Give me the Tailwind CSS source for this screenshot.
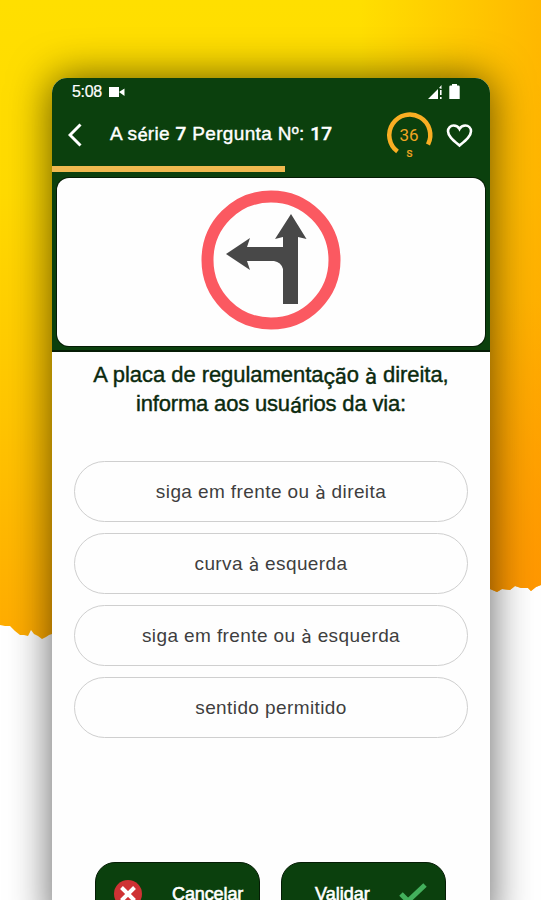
<!DOCTYPE html>
<html lang="pt">
<head>
    <meta charset="utf-8">
    <meta name="viewport" content="width=device-width, initial-scale=1">
    <title>Pergunta 17</title>
    <script src="https://cdn.jsdelivr.net/npm/@tailwindcss/browser@4"></script>
</head>
<body class="relative h-[900px] w-[541px] overflow-hidden bg-white font-['Liberation_Sans',sans-serif]">

    <!-- backdrop with torn edge -->
    <svg class="absolute inset-0" width="541" height="900" viewBox="0 0 541 900">
        <defs>
            <linearGradient id="sun" x1="0" y1="0" x2="0" y2="640" gradientUnits="userSpaceOnUse">
                <stop offset="0" stop-color="#ffdf00"/>
                <stop offset=".3" stop-color="#ffda00"/>
                <stop offset=".65" stop-color="#ffc500"/>
                <stop offset="1" stop-color="#ffab00"/>
            </linearGradient>
            <linearGradient id="side" x1="360" y1="0" x2="560" y2="0" gradientUnits="userSpaceOnUse">
                <stop offset="0" stop-color="#ff8c00" stop-opacity="0"/>
                <stop offset="1" stop-color="#ff8c00" stop-opacity=".52"/>
            </linearGradient>
            <linearGradient id="low" x1="0" y1="300" x2="0" y2="600" gradientUnits="userSpaceOnUse">
                <stop offset="0" stop-color="#ff9000" stop-opacity="0"/>
                <stop offset="1" stop-color="#ff9000" stop-opacity=".55"/>
            </linearGradient>
        </defs>
        <path fill="url(#sun)" d="M0 0H541V585L536 587L531 591L528 588L521 588L515 586L510 590L502 589L497 592L490 589L52 634L49 635L46 637L42 639L38 636L34 634L31 630L28 636L24 635L20 635L15 631L10 626L5 626L0 625Z"/>
        <path fill="url(#side)" d="M300 0H541V585L536 587L531 591L528 588L521 588L515 586L510 590L502 589L497 592L490 589H300Z"/>
        <path fill="url(#low)" d="M300 300H541V585L536 587L531 591L528 588L521 588L515 586L510 590L502 589L497 592L490 589H300Z"/>
    </svg>

    <div class="relative mt-[78px] ml-[52px] flex h-[850px] w-[438px] flex-col overflow-hidden rounded-t-[15px] bg-[#fefefe] shadow-[0_0_42px_1px_rgba(0,0,0,0.6)]">

        <header class="h-[274px] shrink-0 border-b-2 border-[#051c05] bg-[#0b400d]">
            <!-- status bar -->
            <div class="flex h-[27px] items-center pl-5 pr-[30px] text-white">
                <span class="text-base leading-none tracking-[-0.3px] [-webkit-text-stroke:0.2px_white]">5:08</span>
                <svg class="ml-[7px]" width="16" height="10" viewBox="0 0 16 10" fill="#fff"><path d="M0 0h10v10H0zM10 5L15.500 1.500v7.500z"/></svg>
                <svg class="ml-auto" width="14" height="14" viewBox="0 0 14 14" fill="#fff"><path d="M0 14L10 4v10zM12 5h1.600v5H12zM12 12h1.600v2H12zM11 3l2.500-3v4z"/></svg>
                <svg class="ml-[7px]" width="11" height="15" viewBox="0 0 11 15" fill="#fff"><path d="M3 0h5v1.500h1.500q1.200 0 1.200 1.200V15H.3V2.700Q.3 1.500 1.500 1.500H3z"/></svg>
            </div>

            <!-- title bar -->
            <div class="flex h-[61px] items-center pb-px pl-4">
                <svg width="16" height="24" viewBox="0 0 16 24" fill="none" stroke="#fff" stroke-width="3"><path d="M12.500 1.500L2 12l10.500 10.500"/></svg>
                <h1 class="ml-[26px] w-[276px] whitespace-nowrap pb-0.5 text-[19px] leading-none tracking-[0.33px] text-white [-webkit-text-stroke:0.4px_white]">A s<span class="align-[-1px] font-[Roboto] leading-none">é</span>rie <span class="font-[Roboto] font-medium">7</span> Pergunta Nº: <span class="font-[Roboto] font-medium">17</span></h1>
                <svg class="shrink-0 overflow-visible" width="46" height="50" viewBox="0 0 46 50">
                    <path d="M11.500 41.500A20.500 20.500 0 1 1 42 34.500" fill="none" stroke="#f9ae23" stroke-width="4.500"/>
                    <text x="23" y="30.500" text-anchor="middle" font-family="Roboto" font-size="17" fill="#f0a622">36</text>
                    <text x="23.500" y="47" text-anchor="middle" font-family="Roboto" font-size="12.500" fill="#f0a622" stroke="#f0a622" stroke-width=".2">s</text>
                </svg>
                <svg class="ml-[14px] shrink-0" width="27" height="25" viewBox="0 0 27 25" fill="none" stroke="#fff" stroke-width="2.600"><path d="M13.500 22.500C7 17 2 13 2 8.300C2 4.800 4.600 2.500 7.600 2.500C10 2.500 12.300 3.800 13.500 6C14.700 3.800 17 2.500 19.400 2.500C22.400 2.500 25 4.800 25 8.300C25 13 20 17 13.500 22.500Z"/></svg>
            </div>

            <div class="h-1.5 w-[233px] bg-[#efb94f]"></div>

            <!-- traffic sign -->
            <div class="mx-[5px] mt-1.5 flex h-[168px] justify-center rounded-[12px] bg-[#fefefe] ring-1 ring-[#051c05]">
                <svg class="mt-[11px]" width="142" height="142" viewBox="0 0 142 142">
                    <circle cx="71" cy="71" r="63.500" fill="none" stroke="#fb5961" stroke-width="12"/>
                    <path fill="#484848" d="M91 25L106.500 50L98 48V115H83V80Q81 73 74 72H47L50 81L26 65L50 49L47 58H83V48L75 50Z"/>
                </svg>
            </div>
        </header>

        <p class="pt-2 text-center text-[22px] leading-[29px] tracking-[-0.05px] text-[#0b2a0e] [-webkit-text-stroke:0.4px_#0b2a0e]">
            <span class="inline-block whitespace-nowrap">A placa de regulamenta<span class="align-[-2px] font-[Roboto] leading-none">çã</span>o <span class="align-[-2px] font-[Roboto] leading-none">à</span> direita,</span><br>
            <span class="inline-block whitespace-nowrap tracking-[-0.18px]">informa aos usu<span class="align-[-2px] font-[Roboto] leading-none">á</span>rios da via:</span>
        </p>

        <ul class="mt-[43px] ml-[22px] flex w-[394px] flex-col gap-[11px] text-[19px] tracking-[0.4px] text-[#3e3e3e]">
            <li class="flex h-[61px] shrink-0 items-center justify-center rounded-full border-[1.5px] border-[#cfcfcf] pt-px"><span>siga em frente ou <span class="align-[-1px] font-[Roboto] leading-none">à</span> direita</span></li>
            <li class="flex h-[61px] shrink-0 items-center justify-center rounded-full border-[1.5px] border-[#cfcfcf] pt-px"><span>curva <span class="align-[-1px] font-[Roboto] leading-none">à</span> esquerda</span></li>
            <li class="flex h-[61px] shrink-0 items-center justify-center rounded-full border-[1.5px] border-[#cfcfcf] pt-px"><span>siga em frente ou <span class="align-[-1px] font-[Roboto] leading-none">à</span> esquerda</span></li>
            <li class="flex h-[61px] shrink-0 items-center justify-center rounded-full border-[1.5px] border-[#cfcfcf] pt-px"><span>sentido permitido</span></li>
        </ul>

        <div class="mt-[124px] ml-[43px] flex shrink-0 gap-[21px] text-lg leading-none text-white [-webkit-text-stroke:0.6px_white]">
            <button class="flex h-16 w-[165px] items-center rounded-[20px] border border-[#051c05] bg-[#0b400d] pl-[18px]">
                <svg width="28" height="28" viewBox="0 0 28 28"><circle cx="14" cy="14" r="14" fill="#cf3234"/><path d="M7.500 7.500l13 13M20.500 7.500l-13 13" stroke="#fff" stroke-width="4"/></svg>
                <span class="ml-[30px] tracking-[-0.1px]">Cancelar</span>
            </button>
            <button class="flex h-16 w-[165px] items-center rounded-[20px] border border-[#051c05] bg-[#0b400d] pl-[33px]">
                <span>Validar</span>
                <svg class="ml-[29px]" width="28" height="22" viewBox="0 0 28 22" fill="none" stroke="#43b05c" stroke-width="5"><path d="M2 11l7 7L26 2"/></svg>
            </button>
        </div>
    </div>
</body>
</html>
